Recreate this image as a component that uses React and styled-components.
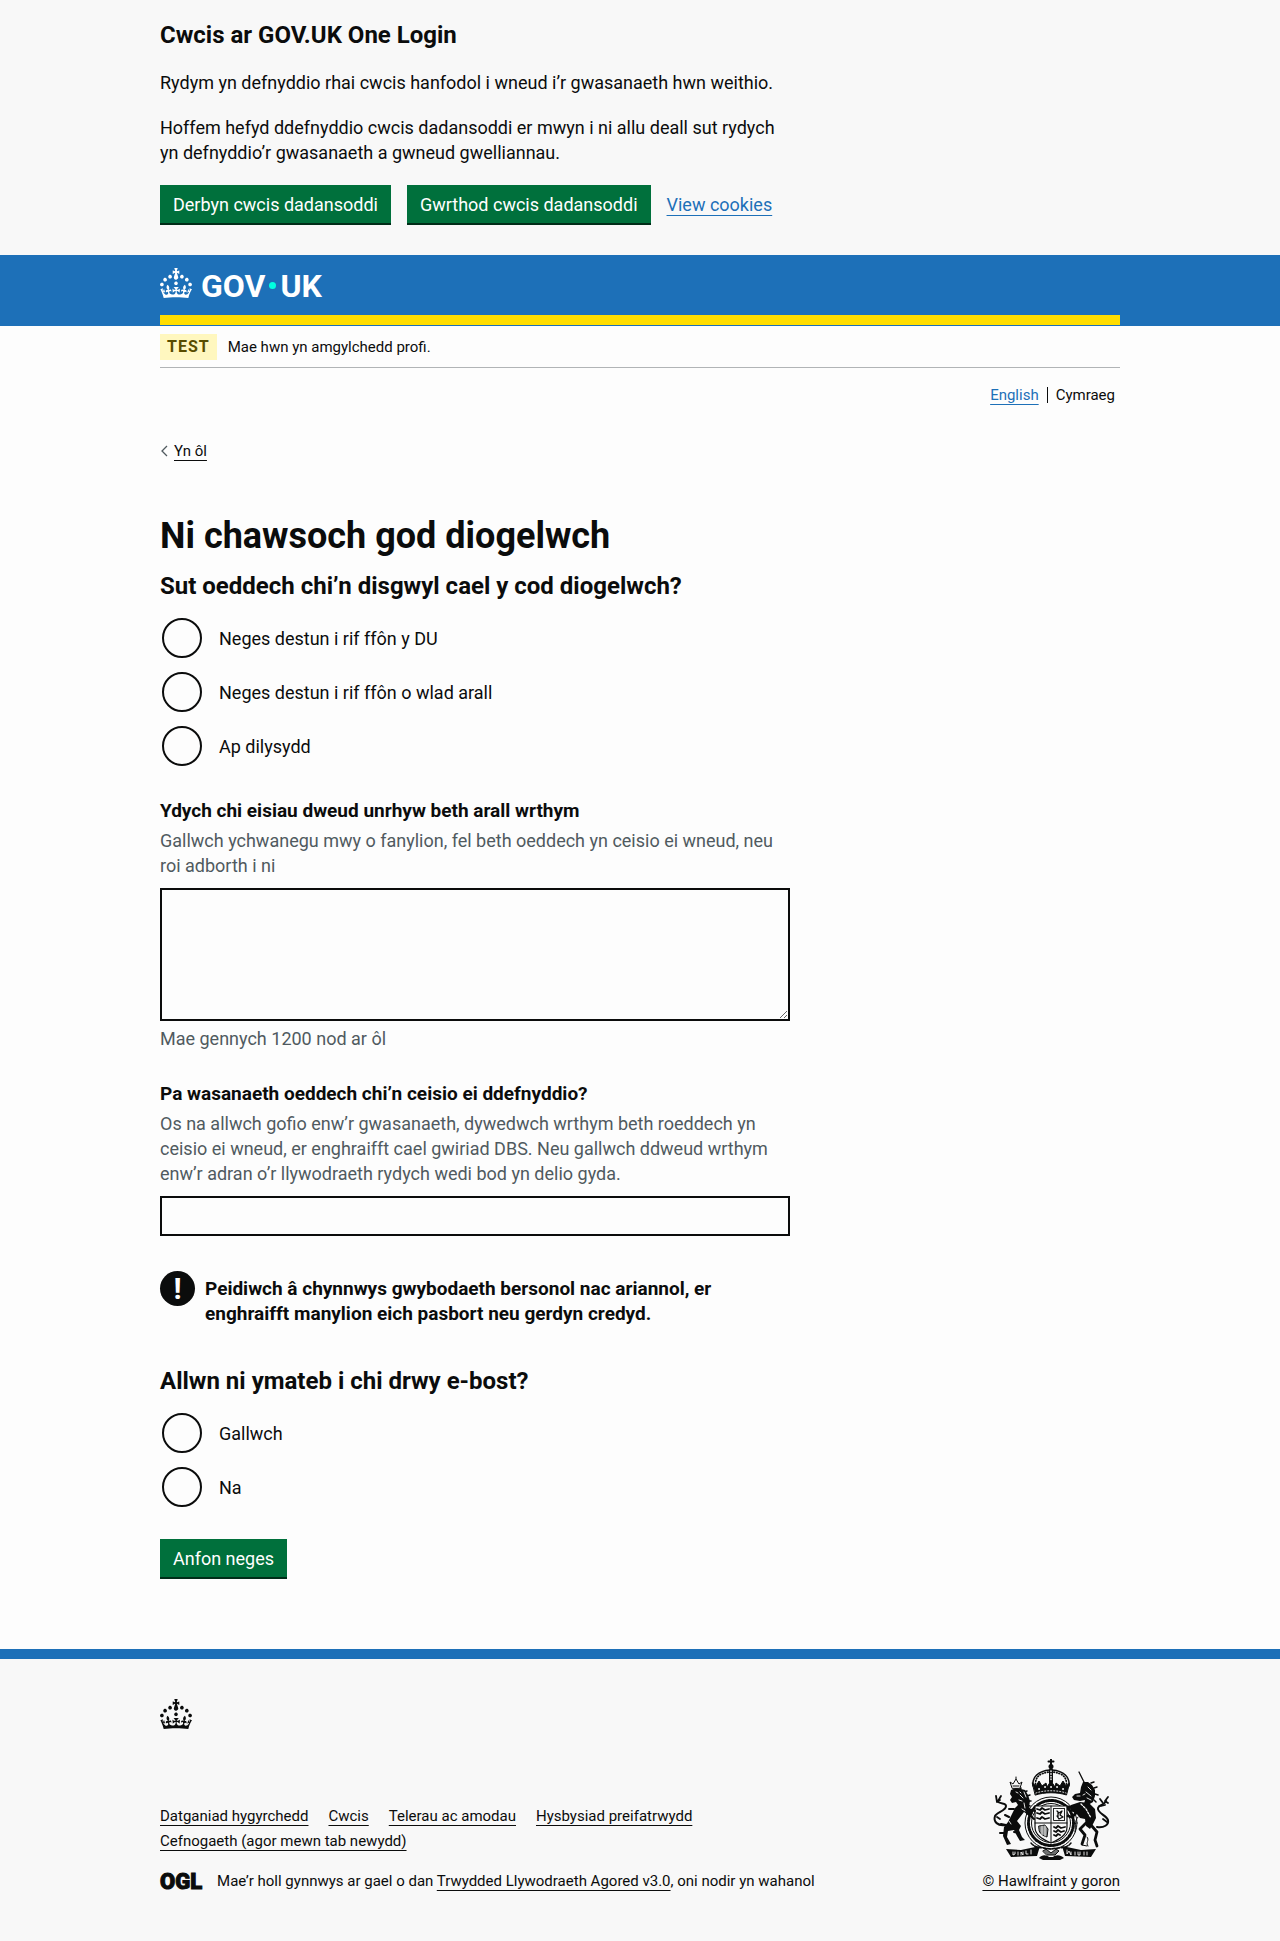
import React, { useState } from "react";
import styled, { createGlobalStyle } from "styled-components";

const INK = "#0b0c0c";
const BLUE = "#1d70b8";
const PALE = "#f8f8f8";

const GlobalStyle = createGlobalStyle`
  *, *::before, *::after { box-sizing: border-box; }
  body {
    margin: 0;
    background: #fdfdfd;
    color: ${INK};
    font-family: Roboto, "Liberation Sans", sans-serif;
    font-size: 18px;
    line-height: 25px;
  }
`;

const Container = styled.div`
  max-width: 990px;
  margin: 0 auto;
  padding: 0 15px;
`;

const TwoThirds = styled.div`
  max-width: 630px;
`;

const Link = styled.a`
  color: ${(p) => (p.$plain ? INK : BLUE)};
  text-decoration: underline;
  text-decoration-thickness: 1px;
  text-underline-offset: 4px;
`;

const Button = styled.button`
  height: 38px;
  padding: 0 13px;
  border: 0;
  border-radius: 0;
  background: #00703c;
  box-shadow: 0 2px 0 #002d18;
  color: #fff;
  font: inherit;
  white-space: nowrap;
  cursor: pointer;
`;

/* Cookie banner */

const CookieBanner = styled.section`
  padding: 20px 0 30px;
  background: ${PALE};
`;

const CookieText = styled.p`
  margin: 20px 0;
`;

const ButtonGroup = styled.div`
  display: flex;
  flex-wrap: wrap;
  align-items: center;
  gap: 16px;
  padding-bottom: 2px;
`;

/* Header */

const Header = styled.header`
  padding-bottom: 1px;
  background: ${BLUE};
`;

const HeaderInner = styled.div`
  height: 70px;
  border-bottom: 10px solid #ffdd00;
  padding-top: 13px;
`;

const HomeLink = styled.a`
  display: inline-flex;
  align-items: center;
  gap: 9px;
  height: 30px;
  color: #fff;
  text-decoration: none;
`;

const Wordmark = styled.span`
  display: flex;
  align-items: center;
  gap: 4px;
  padding-top: 5px;
  font-size: 32px;
  font-weight: 700;
  line-height: 30px;
`;

const Dot = styled.span`
  width: 7px;
  height: 7px;
  border-radius: 50%;
  background: #00ffe0;
`;

const PhaseBanner = styled.div`
  display: flex;
  align-items: center;
  gap: 11px;
  padding: 8px 0 7px;
  border-bottom: 1px solid #b1b4b6;
  font-size: 15px;
`;

const Tag = styled.strong`
  padding: 0 7px;
  background: #fff7bf;
  color: #594d00;
  font-size: 16px;
  line-height: 26px;
  letter-spacing: 1px;
`;

const Languages = styled.nav`
  display: flex;
  justify-content: flex-end;
  padding: 17px 5px 0 0;
  font-size: 15px;
  line-height: 20px;
`;

const Language = styled.span`
  & + & {
    display: flex;
    align-items: center;
  }
  & + &::before {
    content: "";
    height: 16px;
    margin: 0 8px;
    border-left: 1px solid ${INK};
  }
`;

const BackLink = styled(Link)`
  display: inline-flex;
  align-items: center;
  gap: 6px;
  margin-top: 36px;
  font-size: 15px;
  line-height: 20px;
  text-decoration: none;
`;

const BackLabel = styled.span`
  text-decoration: underline;
  text-underline-offset: 4px;
`;

/* Form */

const Main = styled.main`
  padding: 53px 0 72px;
`;

const PageTitle = styled.h1`
  margin: 0 0 15px;
  font-size: 36px;
  line-height: 40px;
`;

const SectionTitle = styled.h2`
  margin: 0;
  font-size: 24px;
  line-height: 30px;
`;

const Fieldset = styled.fieldset`
  min-width: 0;
  margin: 0 0 32px;
  padding: 0;
  border: 0;
`;

const Legend = styled.legend`
  padding: 0;
  font-size: 24px;
  font-weight: 700;
  line-height: 30px;
`;

const RadioList = styled.div`
  display: grid;
  gap: 14px;
  padding: 17px 2px 0;
`;

const RadioRow = styled.div`
  display: flex;
  align-items: center;
  gap: 17px;
`;

const RadioInput = styled.input`
  appearance: none;
  display: grid;
  place-items: center;
  width: 40px;
  height: 40px;
  margin: 0;
  border: 2px solid ${INK};
  border-radius: 50%;
  background: transparent;
  cursor: pointer;
  &:checked::before {
    content: "";
    width: 20px;
    height: 20px;
    border-radius: 50%;
    background: ${INK};
  }
`;

const Field = styled.div`
  margin-bottom: ${(p) => p.$gap}px;
`;

const FieldLabel = styled.label`
  display: block;
  margin-bottom: 5px;
  font-size: 19px;
  font-weight: 700;
`;

const Hint = styled.div`
  color: #505a5f;
`;

const FieldHint = styled(Hint)`
  margin-bottom: 10px;
`;

const TextArea = styled.textarea`
  display: block;
  width: 100%;
  height: 133px;
  margin-bottom: 5px;
  padding: 5px;
  border: 2px solid ${INK};
  border-radius: 0;
  background: transparent;
  font: inherit;
  resize: vertical;
`;

const TextInput = styled.input`
  display: block;
  width: 100%;
  height: 40px;
  padding: 5px;
  border: 2px solid ${INK};
  border-radius: 0;
  background: transparent;
  font: inherit;
`;

const Warning = styled.div`
  display: flex;
  align-items: flex-start;
  gap: 10px;
  margin-bottom: 40px;
`;

const WarningMark = styled.span`
  flex: none;
  width: 35px;
  height: 35px;
  border-radius: 50%;
  background: ${INK};
  color: #fff;
  font-size: 30px;
  font-weight: 700;
  line-height: 35px;
  text-align: center;
`;

const WarningText = styled.strong`
  max-width: 520px;
  padding-top: 5px;
  font-size: 19px;
`;

/* Footer */

const Footer = styled.footer`
  padding: 40px 0 50px;
  border-top: 10px solid ${BLUE};
  background: ${PALE};
  font-size: 15px;
`;

const FooterCrown = styled.div`
  display: flex;
  height: 30px;
`;

const FooterMeta = styled.div`
  display: flex;
  justify-content: space-between;
  align-items: flex-end;
  gap: 30px;
  padding-top: 30px;
`;

const FooterLinks = styled.ul`
  display: flex;
  flex-wrap: wrap;
  column-gap: 20px;
  max-width: 630px;
  margin: 0 0 15px;
  padding: 0;
  list-style: none;
`;

const Licence = styled.div`
  display: flex;
  align-items: center;
  gap: 15px;
`;

const Ogl = styled.span`
  font-size: 22px;
  font-weight: 900;
  -webkit-text-stroke: 1px ${INK};
`;

const Copyright = styled(Link)`
  display: flex;
  flex-direction: column;
  align-items: center;
  gap: 8px;
  white-space: nowrap;
`;

function Crown() {
  return (
    <svg width="32" height="30" viewBox="0 0 32 30" fill="currentColor" aria-hidden="true">
      <path d="M22.6 10.4c-1 .4-2-.1-2.4-1-.4-.9.1-2 1-2.4.9-.4 2 .1 2.4 1s-.1 2-1 2.4m-5.9 6.7c-.9.4-2-.1-2.4-1-.4-.9.1-2 1-2.4.9-.4 2 .1 2.4 1s-.1 2-1 2.4m10.8-3.7c-1 .4-2-.1-2.4-1-.4-.9.1-2 1-2.4.9-.4 2 .1 2.4 1s0 2-1 2.4m3.3 4.8c-1 .4-2-.1-2.4-1-.4-.9.1-2 1-2.4.9-.4 2 .1 2.4 1s-.1 2-1 2.4M17 4.7l2.3 1.2V2.5l-2.3.7-.2-.2.9-3h-3.4l.9 3-.2.2c-.1.1-2.3-.7-2.3-.7v3.4L15 4.7c.1.1.1.2.2.2l-1.3 4c-.1.2-.1.4-.1.6 0 1.1.8 2 1.9 2.2h.7c1-.2 1.9-1.1 1.9-2.1 0-.2 0-.4-.1-.6l-1.3-4c-.1-.2 0-.2.1-.3m-7.6 5.7c.9.4 2-.1 2.4-1 .4-.9-.1-2-1-2.4-.9-.4-2 .1-2.4 1s0 2 1 2.4m-5 3c.9.4 2-.1 2.4-1 .4-.9-.1-2-1-2.4-.9-.4-2 .1-2.4 1s.1 2 1 2.4m-3.2 4.8c.9.4 2-.1 2.4-1 .4-.9-.1-2-1-2.4-.9-.4-2 .1-2.4 1s0 2 1 2.4m14.8 11c4.4 0 8.6.3 12.3.8 1.1-4.5 2.4-7 3.7-8.8l-2.5-.9c.2 1.3.3 1.9 0 2.7-.4-.4-.8-1.1-1.1-2.3l-1.2 4c.7-.5 1.3-.8 2-.9-1.1 2.5-2.6 3.1-3.5 3-1.1-.2-1.7-1.2-1.5-2.1.3-1.2 1.5-1.5 2.1-.1 1.1-2.3-.8-3-2-2.3 1.9-1.9 2.1-3.5.6-5.6-2.1 1.6-2.1 3.2-1.2 5.5-1.2-1.4-3.2-.6-2.5 1.6.9-1.4 2.1-.5 1.9.8-.2 1.1-1.7 2.1-3.5 1.9-2.7-.2-2.9-2.1-2.9-3.6.7-.1 1.9.5 2.9 1.9l.4-4.3c-1.1 1.1-2.1 1.4-3.2 1.4.4-1.2 2.1-3 2.1-3h-5.4s1.7 1.9 2.1 3c-1.1 0-2.1-.2-3.2-1.4l.4 4.3c1-1.4 2.2-2 2.9-1.9-.1 1.5-.2 3.4-2.9 3.6-1.9.2-3.4-.8-3.5-1.9-.2-1.3 1-2.2 1.9-.8.7-2.3-1.2-3-2.5-1.6.9-2.2.9-3.9-1.2-5.5-1.5 2-1.3 3.7.6 5.6-1.2-.7-3.1 0-2 2.3.6-1.4 1.8-1.1 2.1.1.2.9-.3 1.9-1.5 2.1-.9.2-2.4-.5-3.5-3 .6 0 1.2.3 2 .9l-1.2-4c-.3 1.1-.7 1.9-1.1 2.3-.3-.8-.2-1.4 0-2.7l-2.5.9C1.3 23 2.6 25.5 3.7 30c3.7-.5 7.9-.8 12.3-.8" />
    </svg>
  );
}

function RoyalArms() {
  return (
    <svg width="125" height="102" viewBox="0 0 125 102" fill="none" stroke={INK} strokeLinecap="round" strokeLinejoin="round" aria-hidden="true">
      {/* imperial crown */}
      <path d="M62 0v6M59.5 2.5h5" strokeWidth="2" />
      <circle cx="62" cy="7.500" r="2.500" fill={INK} stroke="none" />
      <path d="M44 27c-1-9 5-15 17-16M80 27c1-9-5-15-17-16" strokeWidth="1.500" />
      <path d="M46.500 25c0-7 4-11 14-12M77.500 25c0-7-4-11-14-12" strokeWidth="1.800" strokeDasharray=".5 2.200" />
      <path d="M62 11v12" strokeWidth="4" />
      <path d="M62 12v9" strokeWidth="1.500" stroke={PALE} strokeDasharray=".5 2.200" />
      <path d="M43.500 24l3.500 3 3-5 3 5 4-3 1 4 4-6 4 6 1-4 4 3 3-5 3 5 3.500-3-3 12c-9-3-22-3-31 0z" fill={INK} stroke={INK} strokeWidth="1" />
      <path d="M50 30h.1M56 28h.1M68 28h.1M74 30h.1M62 28h.1" strokeWidth="1.800" stroke={PALE} />
      <path d="M47 34c9-3 21-3 30 0" strokeWidth="1" stroke={PALE} strokeDasharray="1 2" />
      {/* garter and shield */}
      <circle cx="62" cy="64" r="26" strokeWidth="1" />
      <circle cx="62" cy="64" r="22.500" strokeWidth="3" strokeDasharray="1.200 1.600 2.500 1.800 .8 1.400" />
      <circle cx="62" cy="64" r="19.500" strokeWidth="1" />
      <path d="M46 47h32v21c0 8-7 12-16 16-9-4-16-8-16-16z" fill={PALE} strokeWidth="1.200" />
      <path d="M62 47v36M46 64h32" strokeWidth="1" />
      <path d="M48 50l3 1 2-2 3 2 4-1M48 54l3 1 2-2 3 2 4-1M48 59l3 1 2-2 3 2 4-1M65 68l2 1 2-2 3 2 4-1M65 72l2 1 2-2 3 2 3-1M65 76l2 1 2-2 2 1" strokeWidth="1.800" />
      <path d="M64.500 49.500h11v12h-11z" strokeWidth="1" strokeDasharray="1 1" />
      <path d="M68 52l2 2 3-2-2 4 3 2-4 2-2-3M69 54v4" strokeWidth="1.300" />
      <path d="M50 67l6-1 3 4-1 8c-4-1-8-4-8-7z" fill="#8a8c8c" strokeWidth="1" />
      <path d="M53 67v9M56 67v10" strokeWidth=".8" stroke={PALE} />
      {/* lion */}
      <path d="M23 29l-2-6 3 2 3-5 3 5 3-2-2 6zM27 20v-2M24 27h6" strokeWidth="1" />
      <path d="M22 31l5-2 5 1 4 1 3 5 2 6-1 6 4 6-2 4-7-5-7 9 4 5-2 4 3 7 3 3-5 1-3-5-3-6-6 1-1 6 4 7-4 1-4-9 1-9 4-5 3-6 4-8 3-3-2-3-4 1-2-3 2-3-2-3z" fill={INK} stroke="none" />
      <path d="M30 32l2-3M35 33l3-1M38 37l3-1M39 42l3 0M38 46l3 1" strokeWidth="1.500" />
      <path d="M31 36l3 3M30 41l3 1M35 33l2 5M35 44l1 5M27 33l2 1M31 33l1 1M33 50l3 2M20 62l2 3" strokeWidth=".9" stroke={PALE} />
      <path d="M39 50l7 2M38 54l7 6M20 58l-4-2M17 66l-5-1M15 74l-4 0M30 74l-5-1M25 50l-5 0" strokeWidth="2" />
      <path d="M16 66c-7 1-12-3-10-9 2-4 11-5 11-10 0-4-6-1-9-5" strokeWidth="2" />
      <path d="M7 37l1 6 3-2M12 37l-3 5M8 58l3 2" strokeWidth="1.800" />
      {/* unicorn */}
      <path d="M90 13l6 12" strokeWidth="1.300" />
      <path d="M94 23l5 0 4 3 3 5 0 6-2 6-5 3-4-1 1-4-5 1-6-1-2-3 3-3 5-1 1-6z" fill={INK} stroke="none" />
      <path d="M102 24l3-1M105 29l3-1M106 35l3 1M105 41l2 2" strokeWidth="1.500" />
      <path d="M99 28l3 3M97 33l5 4M98 39l4 2M94 36l2-1M88 37l3 0" strokeWidth=".9" stroke={PALE} />
      <path d="M82 46l9-3 9 1 6 6 1 9-3 6-3 5-4-3-1-7-5-1-4-5-6-2z" fill={INK} stroke="none" />
      <path d="M92 45l5 5 5 9" strokeWidth="1.300" stroke={PALE} strokeDasharray="2 1.500" />
      <path d="M87 49l-8-1M88 53l-5 5-4-1M97 64l-6 6 5 6-3 9M102 66l6 7-2 8 2 6" strokeWidth="2.800" />
      <path d="M89 58c-4 5-2 9-3 15M98 78c3 3-2 6 1 9M93 86l5 1" strokeWidth="1" />
      <path d="M108 68c7 1 12-2 11-7-2-5-11-7-10-12 1-4 6-2 8-7" strokeWidth="2" />
      <path d="M119 38l-3 4 3 2M111 40l3 4M114 60l4 3M112 47l4-1" strokeWidth="1.800" />
      {/* compartment and motto scroll */}
      <path d="M42 84c5 6 10 4 20 6 10-2 15 0 20-6" strokeWidth="1.500" strokeDasharray="3 1.500" />
      <path d="M17 90l15 1 19-4-3 10-26 1z" fill={INK} stroke="none" />
      <path d="M107 90l-15 1-19-4 3 10 26 1z" fill={INK} stroke="none" />
      <path d="M24 93v3l2-1v-2M29 93v3M32 96v-3l2 3v-3M37 92v3h2M42 91v4M78 91v4l2-3 2 4v-3M86 93v3M89 93v3h2v-3M95 93v3M98 96v-3" strokeWidth=".9" stroke={PALE} />
      <path d="M54 92l3-2 5 4 5-4 3 2-4 4h-8z" fill="#6f7171" strokeWidth="1" />
      <path d="M50 99c3-4 8-3 10-1h4c2-2 7-3 11 1l-4 2h-17z" fill={INK} stroke="none" />
    </svg>
  );
}

function RadioGroup({ name, options }) {
  return (
    <RadioList>
      {options.map((label, i) => (
        <RadioRow key={label}>
          <RadioInput type="radio" name={name} id={`${name}-${i}`} value={label} />
          <label htmlFor={`${name}-${i}`}>{label}</label>
        </RadioRow>
      ))}
    </RadioList>
  );
}

const FOOTER_LINKS = [
  "Datganiad hygyrchedd",
  "Cwcis",
  "Telerau ac amodau",
  "Hysbysiad preifatrwydd",
  "Cefnogaeth (agor mewn tab newydd)",
];

export default function App() {
  const [comment, setComment] = useState("");
  return (
    <>
      <GlobalStyle />
      <CookieBanner aria-label="Cwcis ar GOV.UK One Login">
        <Container>
          <TwoThirds>
            <SectionTitle>Cwcis ar GOV.UK One Login</SectionTitle>
            <CookieText>Rydym yn defnyddio rhai cwcis hanfodol i wneud i’r gwasanaeth hwn weithio.</CookieText>
            <CookieText>
              Hoffem hefyd ddefnyddio cwcis dadansoddi er mwyn i ni allu deall sut rydych yn defnyddio’r gwasanaeth a
              gwneud gwelliannau.
            </CookieText>
            <ButtonGroup>
              <Button type="button">Derbyn cwcis dadansoddi</Button>
              <Button type="button">Gwrthod cwcis dadansoddi</Button>
              <Link href="#cookies">View cookies</Link>
            </ButtonGroup>
          </TwoThirds>
        </Container>
      </CookieBanner>

      <Header>
        <Container>
          <HeaderInner>
            <HomeLink href="#home" aria-label="GOV.UK">
              <Crown />
              <Wordmark>
                <span>GOV</span>
                <Dot />
                <span>UK</span>
              </Wordmark>
            </HomeLink>
          </HeaderInner>
        </Container>
      </Header>

      <Container>
        <PhaseBanner>
          <Tag>TEST</Tag>
          <span>Mae hwn yn amgylchedd profi.</span>
        </PhaseBanner>
        <Languages aria-label="Dewis iaith">
          <Language>
            <Link href="#en">English</Link>
          </Language>
          <Language>Cymraeg</Language>
        </Languages>
        <BackLink href="#back" $plain>
          <svg width="8" height="12" viewBox="0 0 8 12" fill="none" stroke="#505a5f" strokeWidth="1.3" aria-hidden="true">
            <path d="M7 1L2 6l5 5" />
          </svg>
          <BackLabel>Yn ôl</BackLabel>
        </BackLink>

        <Main>
          <TwoThirds as="form" onSubmit={(e) => e.preventDefault()}>
            <PageTitle>Ni chawsoch god diogelwch</PageTitle>
            <Fieldset>
              <Legend>Sut oeddech chi’n disgwyl cael y cod diogelwch?</Legend>
              <RadioGroup
                name="method"
                options={["Neges destun i rif ffôn y DU", "Neges destun i rif ffôn o wlad arall", "Ap dilysydd"]}
              />
            </Fieldset>

            <Field $gap={30}>
              <FieldLabel htmlFor="comment">Ydych chi eisiau dweud unrhyw beth arall wrthym</FieldLabel>
              <FieldHint id="comment-hint">
                Gallwch ychwanegu mwy o fanylion, fel beth oeddech yn ceisio ei wneud, neu roi adborth i ni
              </FieldHint>
              <TextArea
                id="comment"
                aria-describedby="comment-hint"
                maxLength={1200}
                value={comment}
                onChange={(e) => setComment(e.target.value)}
              />
              <Hint>Mae gennych {1200 - comment.length} nod ar ôl</Hint>
            </Field>

            <Field $gap={35}>
              <FieldLabel htmlFor="service">Pa wasanaeth oeddech chi’n ceisio ei ddefnyddio?</FieldLabel>
              <FieldHint id="service-hint">
                Os na allwch gofio enw’r gwasanaeth, dywedwch wrthym beth roeddech yn ceisio ei wneud, er enghraifft
                cael gwiriad DBS. Neu gallwch ddweud wrthym enw’r adran o’r llywodraeth rydych wedi bod yn delio gyda.
              </FieldHint>
              <TextInput type="text" id="service" aria-describedby="service-hint" />
            </Field>

            <Warning>
              <WarningMark aria-hidden="true">!</WarningMark>
              <WarningText>
                Peidiwch â chynnwys gwybodaeth bersonol nac ariannol, er enghraifft manylion eich pasbort neu gerdyn
                credyd.
              </WarningText>
            </Warning>

            <Fieldset>
              <Legend>Allwn ni ymateb i chi drwy e-bost?</Legend>
              <RadioGroup name="reply" options={["Gallwch", "Na"]} />
            </Fieldset>
            <Button type="submit">Anfon neges</Button>
          </TwoThirds>
        </Main>
      </Container>

      <Footer>
        <Container>
          <FooterCrown>
            <Crown />
          </FooterCrown>
          <FooterMeta>
            <div>
              <FooterLinks>
                {FOOTER_LINKS.map((text) => (
                  <li key={text}>
                    <Link $plain href="#footer">
                      {text}
                    </Link>
                  </li>
                ))}
              </FooterLinks>
              <Licence>
                <Ogl aria-hidden="true">OGL</Ogl>
                <span>
                  Mae’r holl gynnwys ar gael o dan{" "}
                  <Link $plain href="#licence">
                    Trwydded Llywodraeth Agored v3.0
                  </Link>
                  , oni nodir yn wahanol
                </span>
              </Licence>
            </div>
            <Copyright $plain href="#copyright">
              <RoyalArms />
              <span>© Hawlfraint y goron</span>
            </Copyright>
          </FooterMeta>
        </Container>
      </Footer>
    </>
  );
}
